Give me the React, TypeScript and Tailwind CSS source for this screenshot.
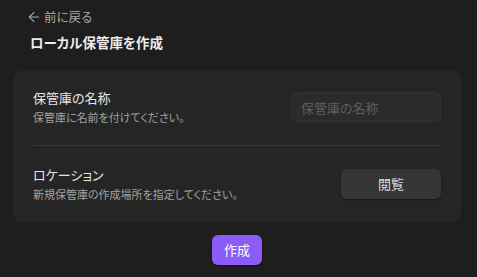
import { ArrowLeft } from 'lucide-react';

const font = { fontFamily: '"Noto Sans CJK JP", "Noto Sans", sans-serif', fontFeatureSettings: '"palt"' };

export default function App() {
  return (
    <div className="min-h-screen w-full bg-[#1e1e1e] pl-[13px] pr-[16px] pt-[8px]" style={font}>
      {/* Header */}
      <div className="pl-[13px]">
        <button className="flex items-center gap-[2px] text-[12.5px] leading-[18px] text-[#a8a8a8]">
          <ArrowLeft size={16} strokeWidth={1.6} />
          <span>前に戻る</span>
        </button>
        <h1 className="mt-[6px] pl-[4px] text-[13.5px] font-bold leading-[20px] text-[#ececec]">
          ローカル保管庫を作成
        </h1>
      </div>

      {/* Card */}
      <div className="mt-[18px] rounded-[10px] bg-[#252525] px-5 pt-[19px] pb-[21px]">
        <div className="flex items-center justify-between">
          <div>
            <div className="text-[13px] leading-[18px] text-[#e6e6e6]">保管庫の名称</div>
            <div className="mt-[2px] text-[11px] leading-[16px] text-[#a3a3a3]">保管庫に名前を付けてください。</div>
          </div>
          <input
            placeholder="保管庫の名称"
            className="h-[30px] w-[150px] rounded-md border border-[#323232] bg-[#2b2b2b] px-[9px] text-[13px] text-[#ddd] outline-none placeholder:text-[#5f5f5f]"
          />
        </div>

        <div className="mt-[20px] h-px bg-[#383838]" />

        <div className="mt-[20px] flex items-center justify-between">
          <div>
            <div className="text-[13px] leading-[18px] text-[#e6e6e6]">ロケーション</div>
            <div className="mt-[2px] text-[11px] leading-[16px] text-[#a3a3a3]">新規保管庫の作成場所を指定してください。</div>
          </div>
          <button className="h-[30px] w-[100px] rounded-md bg-[#363636] text-[13px] text-[#dcdcdc] shadow-[0_1px_2px_rgba(0,0,0,0.4)]">
            閲覧
          </button>
        </div>
      </div>

      <div className="mt-[12px] flex justify-center">
        <button className="h-[30px] w-[50px] rounded-md bg-[#8b5cf6] text-[13px] text-white shadow-[0_1px_2px_rgba(0,0,0,0.4)]">
          作成
        </button>
      </div>
    </div>
  );
}
